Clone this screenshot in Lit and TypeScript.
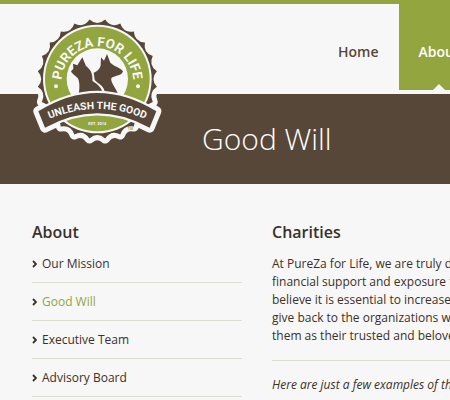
import { LitElement, html, css, svg } from "lit";
import { customElement } from "lit/decorators.js";

const CX = 217;
const CY = 207;
const TEETH = 24;

/** Closed outline of the badge: pointed teeth joined by shallow hollows. */
function scallops(tip: number, hollow: number): string {
  const at = (r: number, a: number) =>
    `${(CX + r * Math.cos(a)).toFixed(1)} ${(CY + r * Math.sin(a)).toFixed(1)}`;
  const step = (2 * Math.PI) / TEETH;
  const start = -Math.PI / 2 + step / 2;
  let d = `M${at(tip, start)}`;
  for (let i = 0; i < TEETH; i++) {
    const a = start + i * step;
    d += `Q${at(hollow, a + step / 2)} ${at(tip, a + step)}`;
  }
  return d + "Z";
}

const EDGE = scallops(180, 158);
const RIBBON = "M40 304Q217 194 394 304L374 353Q217 266 60 353Z";

@customElement("pureza-logo")
export class PurezaLogo extends LitElement {
  static styles = css`
    :host {
      display: block;
    }
    svg {
      display: block;
      width: 100%;
    }
    .paper {
      fill: #f7f7f7;
    }
    .halo {
      fill: #f7f7f7;
      stroke: #f7f7f7;
      stroke-width: 30;
      stroke-linejoin: round;
    }
    .brown {
      fill: #574738;
    }
    .green {
      fill: #92a53e;
    }
    .ribbon {
      fill: #574738;
      stroke: #f7f7f7;
      stroke-width: 14;
      paint-order: stroke;
    }
    .guide {
      fill: none;
    }
    text {
      font-family: Roboto, "Liberation Sans", sans-serif;
      font-weight: 700;
      fill: #f7f7f7;
      text-anchor: middle;
    }
    .ring-text {
      font-size: 40px;
    }
    .ribbon-text {
      font-size: 31px;
    }
    .small {
      font-size: 12px;
    }
    .tm {
      font-size: 10px;
      fill: #92a53e;
    }
  `;

  render() {
    return html`<svg viewBox="0 0 435 420" role="img" aria-label="PureZa for Life">
      ${svg`
        <path class="halo" d=${EDGE} />
        <path class="halo" d=${RIBBON} />
        <path class="brown" d=${EDGE} />
        <circle class="paper" cx=${CX} cy=${CY} r="163" />
        <circle class="green" cx=${CX} cy=${CY} r="157" />
        <circle class="paper" cx=${CX} cy=${CY} r="92" />
        <path class="brown" d="M161 252C165 232 163 216 160 208C157 200 144 196 138 184L145 176L144 161L157 166L172 142L183 168C196 178 204 190 202 212C214 222 230 228 233 252Z" />
        <path class="brown" d="M206 188C216 184 226 176 227 164L228 142L237 152L246 132L256 158C268 170 286 172 294 184C290 198 272 196 259 204C256 218 272 232 279 252H241C238 224 218 222 209 209Z" />
        <path class="ribbon" d=${RIBBON} />
        <circle class="paper" cx="93" cy="229" r="6" />
        <circle class="paper" cx="339" cy="229" r="6" />
        <path id="ring" class="guide" d="M109 217A108 108 0 1 1 325 217" />
        <path id="fold" class="guide" d="M50 337Q217 257 384 337" />
        <text class="ring-text"><textPath href="#ring" startOffset="50%">PUREZA FOR LIFE</textPath></text>
        <text class="ribbon-text"><textPath href="#fold" startOffset="50%">UNLEASH THE GOOD</textPath></text>
        <text class="small" x="217" y="346">EST. 2014</text>
        <text class="tm" x="316" y="361">TM</text>
      `}
    </svg>`;
  }
}

@customElement("app-root")
export class AppRoot extends LitElement {
  static styles = css`
    :host {
      display: block;
      min-height: 100vh;
      overflow: hidden;
      background: #f7f7f7;
      color: #3b302a;
      font: 12px/18px "Open Sans", "Noto Sans", sans-serif;
    }
    header {
      position: relative;
      display: flex;
      padding-left: 318px;
      border-top: 4px solid #92a53e;
      height: 90px;
    }
    .logo {
      position: absolute;
      top: 6px;
      left: 25px;
      width: 145px;
    }
    nav.main {
      display: flex;
      height: 86px;
    }
    nav.main a {
      position: relative;
      display: flex;
      align-items: center;
      padding: 10px 20px 0;
      font-size: 14px;
      font-weight: 600;
      color: #574738;
      text-decoration: none;
    }
    nav.main a.current {
      background: #92a53e;
      color: #fff;
    }
    nav.main a.current::after {
      content: "";
      position: absolute;
      left: 34px;
      bottom: 0;
      border: 6px solid transparent;
      border-top: 0;
      border-bottom-color: #f7f7f7;
    }
    .title {
      padding: 25px 32px 25px 202px;
      background: #574738;
    }
    h1 {
      margin: 0;
      font-size: 30px;
      line-height: 40px;
      font-weight: 300;
      color: #fff;
    }
    .columns {
      display: grid;
      grid-template-columns: 210px minmax(0, 1fr);
      gap: 30px;
      padding: 36px 0 0 32px;
    }
    h2 {
      margin: 0 0 11px;
      font-size: 16px;
      line-height: 24px;
      font-weight: 600;
    }
    ul {
      margin: 0;
      padding: 0;
      list-style: none;
    }
    li {
      border-bottom: 1px solid #dfdcd5;
      margin-bottom: 10px;
      padding-bottom: 9px;
    }
    li a {
      display: flex;
      align-items: center;
      gap: 5px;
      color: inherit;
      text-decoration: none;
    }
    li svg {
      width: 5px;
      height: 8px;
      fill: none;
      stroke: #3b302a;
      stroke-width: 1.8;
    }
    .here {
      color: #92a53e;
    }
    p {
      margin: 0;
      white-space: nowrap;
    }
    .examples {
      margin-top: 15px;
      padding-top: 15px;
      border-top: 1px solid #dfdcd5;
      font-style: italic;
    }
  `;

  private pages = ["Our Mission", "Good Will", "Executive Team", "Advisory Board"];

  render() {
    return html`
      <header>
        <pureza-logo class="logo"></pureza-logo>
        <nav class="main" aria-label="Main">
          <a href="#home">Home</a>
          <a href="#about" class="current" aria-current="page">About</a>
        </nav>
      </header>
      <div class="title"><h1>Good Will</h1></div>
      <main class="columns">
        <nav aria-labelledby="about">
          <h2 id="about">About</h2>
          <ul>
            ${this.pages.map(
              (page) => html`<li>
                <a href="#page">
                  <svg viewBox="0 0 5 8" aria-hidden="true"><path d="M1 1L4 4L1 7" /></svg>
                  <span class=${page === "Good Will" ? "here" : ""}>${page}</span>
                </a>
              </li>`
            )}
          </ul>
        </nav>
        <section>
          <h2>Charities</h2>
          <p>
            At PureZa for Life, we are truly d<br />
            financial support and exposure t<br />
            believe it is essential to increase<br />
            give back to the organizations w<br />
            them as their trusted and belove
          </p>
          <p class="examples">Here are just a few examples of th</p>
        </section>
      </main>
    `;
  }
}
